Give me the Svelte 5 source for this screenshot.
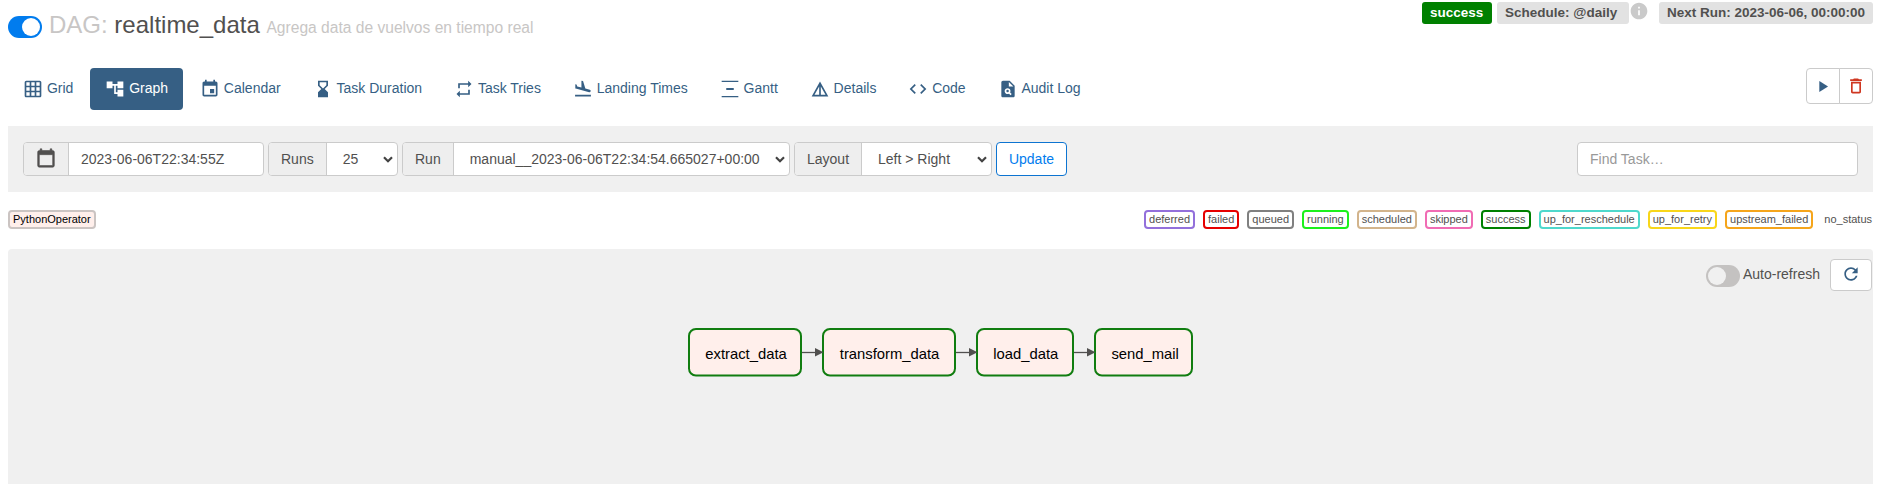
<script>
  const icons = {
    grid: 'M20 2H4c-1.1 0-2 .9-2 2v16c0 1.1.9 2 2 2h16c1.1 0 2-.9 2-2V4c0-1.1-.9-2-2-2zM8 20H4v-4h4v4zm0-6H4v-4h4v4zm0-6H4V4h4v4zm6 12h-4v-4h4v4zm0-6h-4v-4h4v4zm0-6h-4V4h4v4zm6 12h-4v-4h4v4zm0-6h-4v-4h4v4zm0-6h-4V4h4v4z',
    tree: 'M22 11V3h-7v3H9V3H2v8h7V8h2v10h4v3h7v-8h-7v3h-2V8h2v3z',
    event: 'M17 12h-5v5h5v-5zM16 1v2H8V1H6v2H5c-1.11 0-1.99.9-1.99 2L3 19c0 1.1.89 2 2 2h14c1.1 0 2-.9 2-2V5c0-1.1-.9-2-2-2h-1V1h-2zm3 18H5V8h14v11z',
    hourglass: 'M18 22l-.01-6L14 12l3.99-4.01L18 2H6v6l4 4-4 3.99V22h12zM8 7.5V4h8v3.5l-4 4-4-4z',
    repeat: 'M7 7h10v3l4-4-4-4v3H5v6h2V7zm10 10H7v-3l-4 4 4 4v-3h12v-6h-2v4z',
    landing: 'M2.5 19h19v2h-19zm7.18-5.73l4.35 1.16 5.31 1.42c.8.21 1.62-.26 1.84-1.06.21-.8-.26-1.62-1.06-1.84l-5.31-1.42-2.76-9.02L10.12 2v8.28L5.15 8.95l-.93-2.32-1.45-.39v5.17l1.6.43 5.31 1.43z',
    gantt: 'M22 2.2v1.4H2V2.2h20zM7.5 10.8v2.4h9v-2.4h-9zM2 20.4v1.4h20v-1.4H2z',
    details: 'M12 3L2 21h20L12 3zm1 5.92L18.6 19H13V8.92zm-2 0V19H5.4L11 8.92z',
    code: 'M9.4 16.6L4.8 12l4.6-4.6L8 6l-6 6 6 6 1.4-1.4zm5.2 0l4.6-4.6-4.6-4.6L16 6l6 6-6 6-1.4-1.4z',
    audit: 'M14 2H6c-1.1 0-1.99.9-1.99 2L4 20c0 1.1.89 2 1.99 2H18c1.1 0 2-.9 2-2V8l-6-6zm1.04 17.45l-1.88-1.88c-1.33.71-3.01.53-4.13-.59-1.37-1.37-1.37-3.58 0-4.95 1.37-1.37 3.58-1.37 4.95 0 1.12 1.12 1.31 2.8.59 4.13l1.88 1.88-1.41 1.41zM13 9V3.5L18.5 9H13zM11.5 13a1.5 1.5 0 1 0 0 3a1.5 1.5 0 1 0 0-3z',
    play: 'M8 5v14l11-7z',
    trash: 'M6 19c0 1.1.9 2 2 2h8c1.1 0 2-.9 2-2V7H6v12zM8 9h8v10H8V9zm7.5-5l-1-1h-5l-1 1H5v2h14V4z',
    calendar: 'M20 3h-1V1h-2v2H7V1H5v2H4c-1.1 0-2 .9-2 2v16c0 1.1.9 2 2 2h16c1.1 0 2-.9 2-2V5c0-1.1-.9-2-2-2zm0 18H4V8h16v13z',
    refresh: 'M17.65 6.35C16.2 4.9 14.21 4 12 4c-4.42 0-7.99 3.58-7.99 8s3.57 8 7.99 8c3.73 0 6.84-2.55 7.73-6h-2.08c-.82 2.33-3.04 4-5.65 4-3.31 0-6-2.69-6-6s2.69-6 6-6c1.66 0 3.14.69 4.22 1.78L13 11h7V4l-2.35 2.35z',
    info: 'M12 2C6.48 2 2 6.48 2 12s4.48 10 10 10 10-4.48 10-10S17.52 2 12 2zm1 15h-2v-6h2v6zm0-8h-2V7h2v2z'
  };

  const tabs = [
    ['grid', 'Grid'],
    ['tree', 'Graph'],
    ['event', 'Calendar'],
    ['hourglass', 'Task Duration'],
    ['repeat', 'Task Tries'],
    ['landing', 'Landing Times'],
    ['gantt', 'Gantt'],
    ['details', 'Details'],
    ['code', 'Code'],
    ['audit', 'Audit Log']
  ];

  const states = [
    ['deferred', 'mediumpurple'],
    ['failed', '#e60000'],
    ['queued', 'gray'],
    ['running', '#1cf01c'],
    ['scheduled', 'tan'],
    ['skipped', '#f06cb4'],
    ['success', 'green'],
    ['up_for_reschedule', '#4fd8cc'],
    ['up_for_retry', '#f8d61a'],
    ['upstream_failed', '#f5a51b']
  ];

  // Task boxes on the graph canvas, left to right
  const nodes = [
    { id: 'extract_data', x: 681, w: 112, tx: 697.3 },
    { id: 'transform_data', x: 815, w: 132, tx: 831.8 },
    { id: 'load_data', x: 969, w: 96, tx: 985.3 },
    { id: 'send_mail', x: 1087, w: 97, tx: 1103.4 }
  ];
</script>

{#snippet icon(name, size = 20)}
  <svg class="icon" width={size} height={size} viewBox="0 0 24 24" fill-rule="evenodd"><path d={icons[name]} /></svg>
{/snippet}

{#snippet chevron()}
  <svg class="chevron" width="10" height="7" viewBox="0 0 10 7"><path d="M1 1.2l4 4 4-4" /></svg>
{/snippet}

<main>
  <header>
    <span class="switch on"></span>
    <h3><span class="muted">DAG:</span> realtime_data <small>Agrega data de vuelvos en tiempo real</small></h3>
    <div class="labels">
      <span class="label ok">success</span>
      <span class="label schedule">Schedule: @daily</span>
      <span class="info">{@render icon('info')}</span>
      <span class="label next">Next Run: 2023-06-06, 00:00:00</span>
    </div>
  </header>

  <nav>
    {#each tabs as [name, text]}
      <a class:active={text === 'Graph'}>{@render icon(name)}<span>{text}</span></a>
    {/each}
    <div class="actions">
      <button class="play">{@render icon('play', 19)}</button>
      <button class="danger">{@render icon('trash')}</button>
    </div>
  </nav>

  <section class="filters">
    <div class="group date">
      <span class="addon cal">{@render icon('calendar')}</span>
      <span class="field">2023-06-06T22:34:55Z</span>
    </div>
    <div class="group runs">
      <span class="addon">Runs</span>
      <span class="field select">25{@render chevron()}</span>
    </div>
    <div class="group run">
      <span class="addon">Run</span>
      <span class="field select">manual__2023-06-06T22:34:54.665027+00:00{@render chevron()}</span>
    </div>
    <div class="group layout">
      <span class="addon">Layout</span>
      <span class="field select">Left &gt; Right{@render chevron()}</span>
    </div>
    <button class="update">Update</button>
    <div class="group find"><span class="field">Find Task…</span></div>
  </section>

  <section class="legend">
    <span class="item operator">PythonOperator</span>
    <div class="states">
      {#each states as [name, color]}
        <span class="item" style="border-color: {color}">{name}</span>
      {/each}
      <span class="item none">no_status</span>
    </div>
  </section>

  <section class="graph">
    <svg class="dag" width="1865" height="235" viewBox="0 0 1865 235">
      {#each nodes as node, i}
        {#if i > 0}
          <path class="edge" d="M{nodes[i - 1].x + nodes[i - 1].w + 1} 103.5H{node.x - 7}" />
        {/if}
        <rect class="node" x={node.x} y="80" width={node.w} height="46.5" rx="7" />
        {#if i > 0}
          <path class="arrow" d="M{node.x - 8} 99l8.5 4.3l-8.5 4.3z" />
        {/if}
        <text x={node.tx} y="110">{node.id}</text>
      {/each}
    </svg>
    <div class="refresh">
      <span class="switch"></span>
      <span class="auto">Auto-refresh</span>
      <button>{@render icon('refresh')}</button>
    </div>
  </section>
</main>

<style>
  :global(body) {
    background: #fff;
  }
  main {
    box-sizing: border-box;
    width: 1880px;
    height: 484px;
    padding: 0 7px 0 8px;
    overflow: hidden;
    display: flex;
    flex-direction: column;
    font: 14px/20px 'Liberation Sans', Arial, sans-serif;
    color: #51504f;
  }
  main :global(*) {
    box-sizing: border-box;
  }
  .icon {
    display: block;
    flex: none;
    fill: currentColor;
  }
  button {
    display: flex;
    align-items: center;
    justify-content: center;
    margin: 0;
    padding: 0;
    font: inherit;
    color: #365f84;
    background: #fff;
    border: 1px solid #cbcbcb;
    border-radius: 4px;
  }
  header {
    display: flex;
    align-items: flex-start;
    height: 68px;
    flex: none;
  }
  .switch {
    flex: none;
    display: flex;
    width: 34px;
    height: 22px;
    padding: 2px;
    border-radius: 11px;
    background: #c4c2c1;
  }
  .switch::before {
    content: '';
    width: 18px;
    height: 18px;
    border-radius: 50%;
    background: #f0f0f0;
  }
  .switch.on {
    margin-top: 16px;
    background: #017cee;
    justify-content: flex-end;
  }
  .switch.on::before {
    background: #fff;
  }
  h3 {
    margin: 12px 0 0 7px;
    font-size: 24px;
    line-height: 26px;
    font-weight: 400;
    white-space: nowrap;
  }
  .muted,
  small {
    color: #c8c6c5;
  }
  small {
    font-size: 15.6px;
  }
  .labels {
    display: flex;
    margin: 2px 0 0 auto;
  }
  .label {
    height: 22px;
    padding: 0 8px;
    font-size: 13.5px;
    line-height: 21px;
    font-weight: 700;
    border-radius: 3px;
    background: #e2e2e2;
    white-space: nowrap;
  }
  .label.ok {
    width: 70px;
    margin-right: 5px;
    color: #fff;
    background: #008000;
  }
  .label.schedule {
    width: 132px;
  }
  .label.next {
    width: 214px;
  }
  .info {
    margin: -1px 10px 0 0;
    color: #cacaca;
  }
  nav {
    display: flex;
    gap: 2px;
    height: 58px;
    flex: none;
  }
  nav a {
    display: flex;
    align-items: center;
    gap: 3.9px;
    height: 42px;
    padding: 0 15px;
    border-radius: 4px;
    color: #365f84;
    white-space: nowrap;
  }
  nav a span {
    margin: 0 -0.1px 2px 0;
  }
  nav a.active {
    color: #fff;
    background: #365f84;
  }
  .actions {
    display: flex;
    margin-left: auto;
  }
  .actions button {
    width: 34px;
    height: 36px;
    border-radius: 4px 0 0 4px;
  }
  .actions .play {
    padding-right: 1px;
  }
  .actions .danger {
    margin-left: -1px;
    color: #cf3721;
    border-radius: 0 4px 4px 0;
  }
  .filters {
    display: flex;
    align-items: center;
    gap: 4px;
    height: 66px;
    flex: none;
    padding: 0 15px;
    background: #f0f0f0;
  }
  .group {
    display: flex;
    height: 34px;
    border: 1px solid #cbcbcb;
    border-radius: 4px;
    overflow: hidden;
    background: #fff;
    line-height: 32px;
    white-space: nowrap;
  }
  .addon {
    flex: none;
    padding: 0 12px;
    background: #eee;
    border-right: 1px solid #cbcbcb;
  }
  .cal {
    display: flex;
    align-items: center;
    padding-bottom: 2px;
  }
  .cal :global(path) {
    stroke: currentColor;
    stroke-width: 0.7;
  }
  .field {
    flex: 1;
    padding-left: 12px;
  }
  .select {
    display: flex;
    align-items: center;
    justify-content: space-between;
    padding: 0 4px 0 16px;
  }
  .chevron path {
    fill: none;
    stroke: #444;
    stroke-width: 2.2;
  }
  .date {
    width: 241px;
  }
  .runs {
    width: 130px;
  }
  .run {
    width: 388px;
  }
  .layout {
    width: 198px;
  }
  .update {
    width: 71px;
    height: 34px;
    color: #017cee;
    border-color: #0d74d1;
  }
  .find {
    width: 281px;
    margin-left: auto;
    color: #999;
  }
  .legend {
    display: flex;
    justify-content: space-between;
    align-items: flex-start;
    height: 57px;
    padding-top: 18px;
    flex: none;
  }
  .states {
    display: flex;
    gap: 8px;
  }
  .item {
    height: 19px;
    padding: 0 3px;
    font-size: 11px;
    line-height: 15px;
    border: 2px solid #cbc4c2;
    border-radius: 4px;
    background: #fff;
    white-space: nowrap;
  }
  .operator {
    color: #000;
    background: #ffefeb;
  }
  .none {
    padding-right: 1px;
    border-color: transparent;
    border-width: 2px 0;
  }
  .graph {
    position: relative;
    height: 235px;
    flex: none;
    background: #f0f0f0;
    border-radius: 4px 4px 0 0;
  }
  .dag {
    display: block;
  }
  .node {
    fill: #ffefeb;
    stroke: #107d10;
    stroke-width: 2;
  }
  .edge {
    stroke: #51504f;
    stroke-width: 1.3;
  }
  .arrow {
    fill: #51504f;
  }
  text {
    font-size: 14.8px;
    fill: #000;
  }
  .refresh {
    position: absolute;
    top: 10px;
    right: 1px;
    display: flex;
    align-items: flex-start;
  }
  .refresh .switch {
    margin-top: 6px;
  }
  .auto {
    margin: 5px 10px 0 3px;
  }
  .refresh button {
    width: 42px;
    height: 32px;
    padding-bottom: 2px;
  }
</style>
